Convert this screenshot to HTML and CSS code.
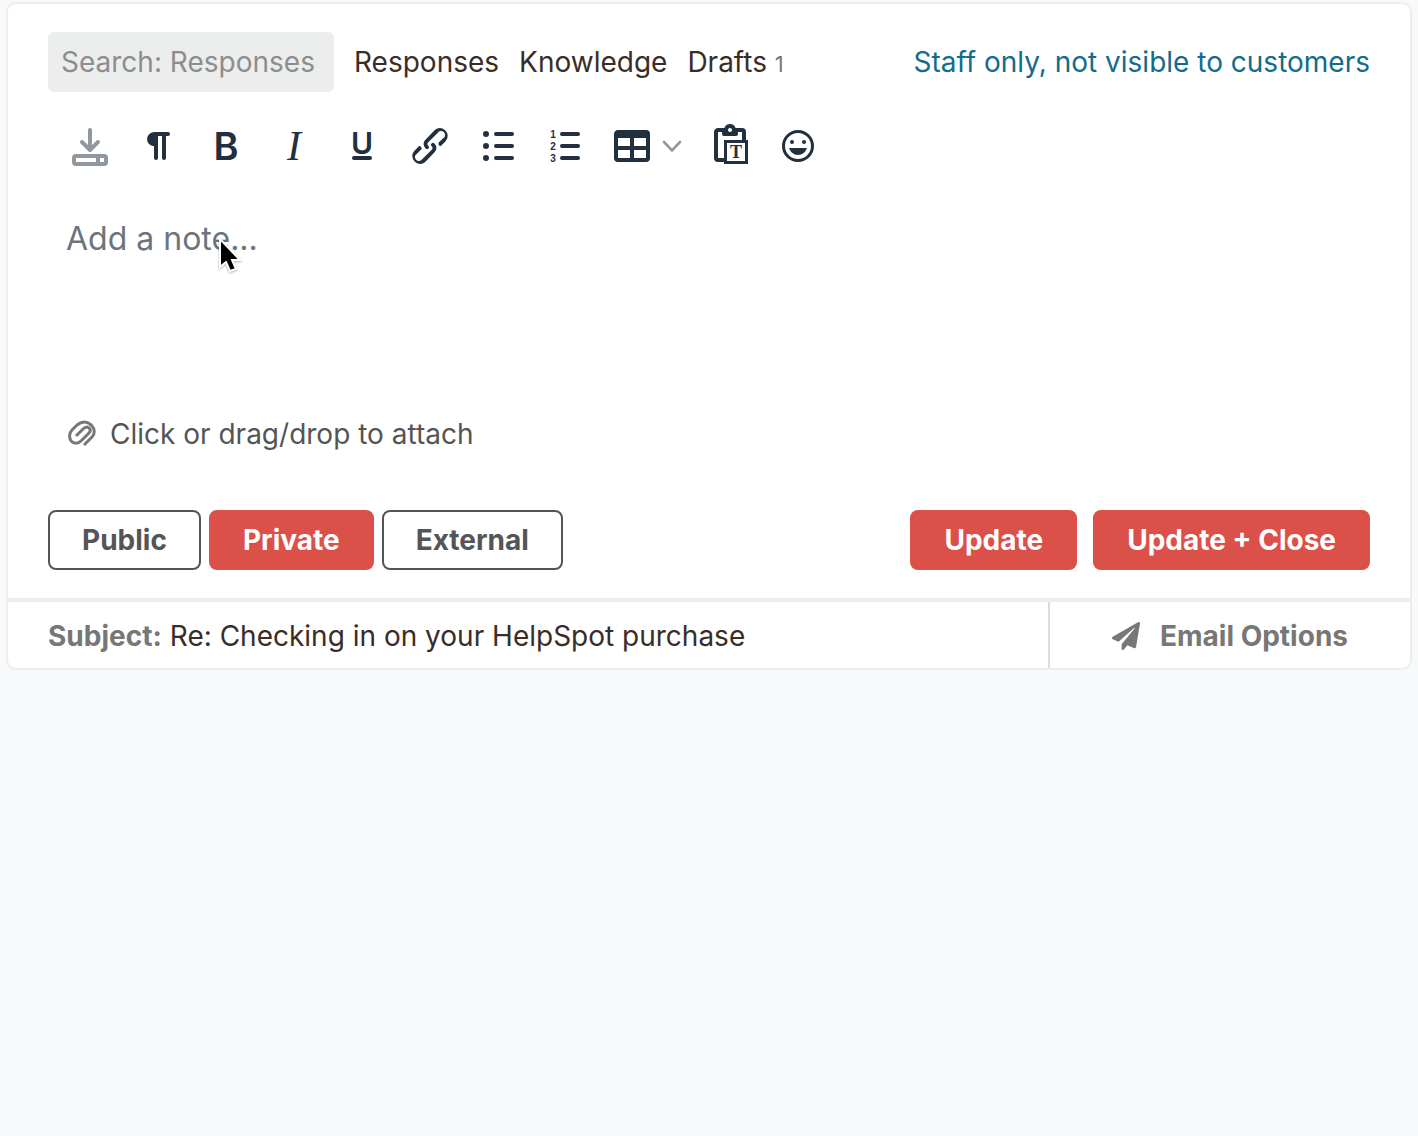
FILE: index.html
```html
<!DOCTYPE html>
<html lang="en">
<head>
<meta charset="utf-8">
<meta name="viewport" content="width=device-width, initial-scale=1">
<title>Add a note</title>
<link rel="stylesheet" href="styles.css">
</head>

<body>
<form class="note_box" action="" method="get">
	<div class="note_top">
		<input type="text" class="search" placeholder="Search: Responses" aria-label="Search: Responses">
		<a href="#responses">Responses</a>
		<a href="#knowledge">Knowledge</a>
		<a href="#drafts">Drafts <span class="count">1</span></a>
		<a href="#staff" class="staff">Staff only, not visible to customers</a>
	</div>

	<div class="toolbar">
		<div class="tools">
			<button type="button" class="muted" aria-label="Restore last draft">
				<svg viewBox="0 0 24 24"><path d="M12 4v9.500M8 10l4 4 4-4" fill="none" stroke="currentColor" stroke-width="2" stroke-linecap="round" stroke-linejoin="round"/><path fill-rule="evenodd" d="M5 16h14a2 2 0 0 1 2 2v2a2 2 0 0 1-2 2H5a2 2 0 0 1-2-2v-2a2 2 0 0 1 2-2zM5 18v2h10v-2zM17 18v2h2v-2z"/></svg>
			</button>
			<button type="button" aria-label="Paragraph">
				<svg viewBox="0 0 24 24"><path d="M10 5h7a1 1 0 0 1 0 2h-1v11a1 1 0 0 1-2 0V7h-2v11a1 1 0 0 1-2 0v-6c-.5 0-1 0-1.400-.3A3.400 3.400 0 0 1 6.800 10a3.300 3.300 0 0 1 0-2.800 3.400 3.400 0 0 1 1.800-1.800L10 5z"/></svg>
			</button>
			<button type="button" aria-label="Bold">
				<svg viewBox="0 0 24 24"><text class="ico_b" x="12" y="19">B</text></svg>
			</button>
			<button type="button" aria-label="Italic">
				<svg viewBox="0 0 24 24"><text class="ico_i" x="12" y="19">I</text></svg>
			</button>
			<button type="button" aria-label="Underline">
				<svg viewBox="0 0 24 24"><text class="ico_u" x="12" y="16">U</text><rect x="7" y="17" width="10" height="2" rx="1"/></svg>
			</button>
			<button type="button" aria-label="Link">
				<svg viewBox="0 0 24 24"><path d="M6.200 12.300a1 1 0 0 1 1.400 1.400l-2 2a2 2 0 1 0 2.600 2.800l4.800-4.800a1 1 0 0 0 0-1.400 1 1 0 1 1 1.400-1.300 2.900 2.900 0 0 1 0 4L9.600 20a3.900 3.900 0 0 1-5.500-5.500l2-2zm11.600-.6a1 1 0 0 1-1.400-1.400l2-2a2 2 0 1 0-2.600-2.800L11 10.300a1 1 0 0 0 0 1.400A1 1 0 1 1 9.600 13a2.900 2.900 0 0 1 0-4L14.400 4a3.900 3.900 0 0 1 5.500 5.500l-2 2z"/></svg>
			</button>
			<button type="button" aria-label="Bullet list">
				<svg viewBox="0 0 24 24"><circle cx="6" cy="6" r="1.500"/><circle cx="6" cy="12" r="1.500"/><circle cx="6" cy="18" r="1.500"/><path d="M11 6h8M11 12h8M11 18h8" stroke="currentColor" stroke-width="2" stroke-linecap="round"/></svg>
			</button>
			<button type="button" aria-label="Numbered list">
				<svg viewBox="0 0 24 24"><g class="ico_num"><text x="5.500" y="8">1</text><text x="5.500" y="14">2</text><text x="5.500" y="20">3</text></g><path d="M10 6h8M10 12h8M10 18h8" stroke="currentColor" stroke-width="2" stroke-linecap="round"/></svg>
			</button>
		</div>
		<div class="tools">
			<button type="button" class="table_btn" aria-label="Table">
				<svg viewBox="0 0 24 24"><path d="M19 4a2 2 0 0 1 2 2v12a2 2 0 0 1-2 2H5a2 2 0 0 1-2-2V6c0-1.100.9-2 2-2h14zM5 14v4h6v-4H5zm14 0h-6v4h6v-4zm0-6h-6v4h6V8zM5 12h6V8H5v4z"/></svg>
				<svg class="arrow muted" viewBox="0 0 10 10"><path d="M1 3l4 4.200L9 3" fill="none" stroke="currentColor" stroke-width="1.300" stroke-linecap="round"/></svg>
			</button>
			<button type="button" aria-label="Paste as text">
				<svg viewBox="0 0 24 24"><path d="M18 9V5h-2v1c0 .6-.4 1-1 1H9a1 1 0 0 1-1-1V5H6v13h3V9h9zM9 20H6a2 2 0 0 1-2-2V5c0-1.100.9-2 2-2h3.200A3 3 0 0 1 12 1a3 3 0 0 1 2.800 2H18a2 2 0 0 1 2 2v4h1v12H9v-1zm1.500-9.500v9h9v-9h-9zM12 3a1 1 0 0 0-1 1c0 .5.4 1 1 1s1-.4 1-1-.4-1-1-1z"/><text class="ico_t" x="15" y="18">T</text></svg>
			</button>
			<button type="button" aria-label="Emoticons">
				<svg viewBox="0 0 24 24"><path d="M9 11c.6 0 1-.4 1-1s-.4-1-1-1a1 1 0 0 0-1 1c0 .6.4 1 1 1zm6 0c.6 0 1-.4 1-1s-.4-1-1-1a1 1 0 0 0-1 1c0 .6.4 1 1 1zm-3 5.500c2.100 0 4-1.500 4.400-3.500H7.600c.5 2 2.300 3.500 4.400 3.500zM12 4a8 8 0 1 0 0 16 8 8 0 0 0 0-16zm0 14.500a6.500 6.500 0 1 1 0-13 6.500 6.500 0 0 1 0 13z"/></svg>
			</button>
		</div>
	</div>

	<div class="editor">
		<textarea placeholder="Add a note..." aria-label="Add a note"></textarea>
		<svg class="cursor" viewBox="0 0 24 36"><path d="M2 1v28l6-5 4 9 6-2-4-9h8z" fill="#000" stroke="#fff" stroke-width="2"/></svg>
	</div>

	<button type="button" class="attach">
		<svg viewBox="0 0 28 28"><path d="M16 25L24 17C27 14 27 9 24 6C20 1 14 1 9 5L4 10C1 13 1 18 3 21C6 24 10 24 13 21L21 13C23 11 22 9 21 8C19 6 17 7 15 9L8 16" fill="none" stroke="currentColor" stroke-width="3"/></svg>
		Click or drag/drop to attach
	</button>

	<div class="actions">
		<button type="button" class="btn">Public</button>
		<button type="button" class="btn btn_red">Private</button>
		<button type="button" class="btn">External</button>
		<button type="submit" class="btn btn_red update">Update</button>
		<button type="submit" class="btn btn_red close">Update + Close</button>
	</div>

	<div class="note_foot">
		<div class="subject">
			<label for="subject">Subject:</label>
			<input type="text" id="subject" name="subject" value="Re: Checking in on your HelpSpot purchase">
		</div>
		<button type="button" class="options">
			<svg viewBox="0 0 512 512"><path d="M476 3L12 271c-18 10-16 36 2 43l107 45L409 106c5-5 13 2 8 8L176 407v80c0 24 28 33 42 16l64-78 125 53c14 6 31-3 33-19L512 28c3-21-19-35-36-25z"/></svg>
			Email Options
		</button>
	</div>
</form>
</body>
</html>
```
FILE: styles.css
```css
*{ box-sizing:border-box;}
body{ margin:0; padding:2px 6px; background:#f8f9fb; font-family:"Inter","Liberation Sans",sans-serif; font-size:28px; line-height:36px; color:#3a2d27;}
input,button,textarea{ margin:0; padding:0; border:0; background:none; font:inherit; color:inherit;}
button{ cursor:pointer;}
a{ color:inherit; text-decoration:none;}
svg{ display:block; flex:none; fill:currentColor;}

.note_box{ border:2px solid #eceeee; border-radius:10px; background:#fff;}

.note_top{ display:flex; align-items:center; gap:20px; padding:28px 40px 0;}
.search{ width:286px; height:60px; padding:0 13px; border-radius:6px; background:#eceeed;}
.search::placeholder{ color:#8d8d8d; opacity:1;}
.count{ font-size:22px; line-height:1; color:#777;}
.staff{ margin-left:auto; color:#126c8c;}

.toolbar{ display:flex; gap:18px; padding:30px 58px 0; color:#222f3e;}
.tools{ display:flex; gap:20px;}
.toolbar svg{ width:48px; height:48px;}
.toolbar .muted{ color:#9197a0;}
.toolbar .table_btn{ display:flex; align-items:center; gap:6px; margin-right:4px;}
.toolbar .arrow{ width:20px; height:20px;}
.toolbar text{ text-anchor:middle;}
.ico_b{ font-size:19px; font-weight:600;}
.ico_i{ font:italic 21px "Liberation Serif",serif;}
.ico_u{ font-size:15px; font-weight:600;}
.ico_num{ font:bold 5px "Liberation Sans",sans-serif;}
.ico_t{ font:bold 9px "Liberation Serif",serif;}

.editor{ position:relative; padding:48px 58px 0;}
.editor textarea{ display:block; width:100%; height:180px; resize:none; font-size:32px; line-height:42px; outline:0;}
.editor textarea::placeholder{ color:#6c747d; opacity:1;}
.cursor{ position:absolute; left:210px; top:68px; width:24px; height:36px; filter:drop-shadow(0 1px 1px rgba(0,0,0,.3));}

.attach{ display:flex; align-items:center; gap:14px; margin:18px 60px 0; color:#555;}
.attach svg{ width:28px; height:28px; color:#777;}

.actions{ display:flex; gap:8px; padding:58px 40px 28px;}
.btn{ height:60px; padding:0 32px; border:2px solid #555; border-radius:8px; font-weight:700; color:#555;}
.btn_red{ border-color:#db5049; background:#db5049; color:#fff;}
.update{ margin-left:auto;}
.close{ margin-left:8px;}

.note_foot{ display:flex; border-top:4px solid #eceeee;}
.subject{ display:flex; flex:1; align-items:center; gap:8px; height:66px; padding:2px 0 0 40px;}
.subject label{ font-weight:700; color:#777;}
.subject input{ flex:1; min-width:0;}
.options{ display:flex; align-items:center; justify-content:center; gap:20px; padding:2px 62px 0; border-left:2px solid #ddd; font-weight:700; color:#777;}
.options svg{ width:28px; height:28px;}
```
